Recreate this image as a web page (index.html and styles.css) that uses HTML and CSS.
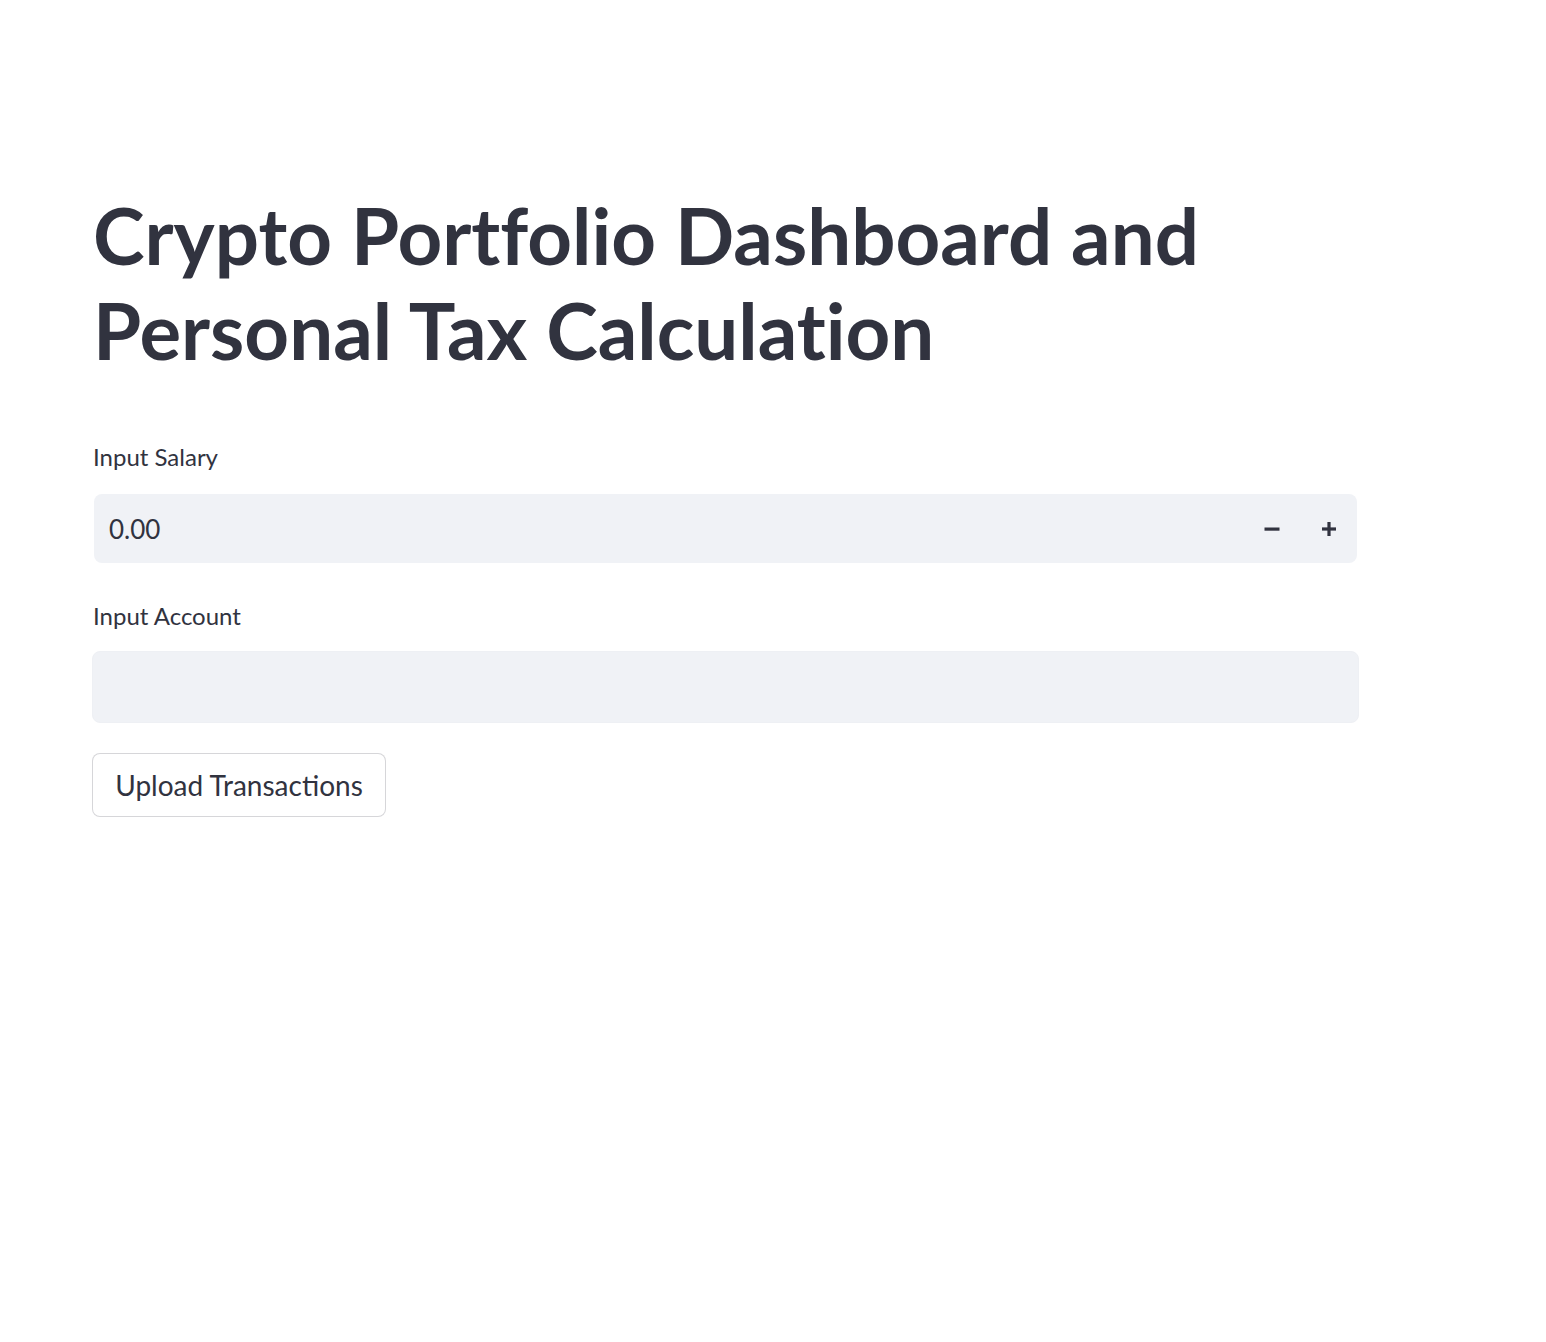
FILE: index.html
```html
<!DOCTYPE html>
<html lang="en">
<head>
<meta charset="utf-8">
<title>Crypto Portfolio Dashboard</title>
<link rel="stylesheet" href="styles.css">
</head>
<body>
<main class="page">
  <h1 class="title">Crypto Portfolio Dashboard and Personal Tax Calculation</h1>

  <div class="field salary">
    <label class="label">Input Salary</label>
    <div class="number-input">
      <span class="value">0.00</span>
      <div class="steps">
        <button class="step" aria-label="decrement">
          <svg width="18" height="18" viewBox="0 0 18 18"><rect x="1.5" y="7.5" width="15" height="3.2" fill="#31333f"/></svg>
        </button>
        <button class="step" aria-label="increment">
          <svg width="18" height="18" viewBox="0 0 18 18"><rect x="2" y="7.4" width="14" height="3.2" fill="#31333f"/><rect x="7.4" y="2" width="3.2" height="14" fill="#31333f"/></svg>
        </button>
      </div>
    </div>
  </div>

  <div class="field account">
    <label class="label">Input Account</label>
    <div class="text-input"></div>
  </div>

  <button class="upload">Upload Transactions</button>
</main>
</body>
</html>
```

FILE: styles.css
```css
html, body {
  margin: 0;
  padding: 0;
  background: #ffffff;
}
body {
  font-family: "Lato", "Noto Sans", sans-serif;
  color: #31333f;
  font-variant-ligatures: none;
}
.page {
  display: flex;
  flex-direction: column;
  align-items: flex-start;
  width: 1267px;
  padding: 188px 0 0 92px;
}
.title {
  margin: 0;
  font-size: 78px;
  font-weight: 700;
  line-height: 95px;
  width: 1200px;
  padding-left: 1px;
  font-variant-ligatures: none;
}
.field {
  display: flex;
  flex-direction: column;
  width: 100%;
}
.salary {
  margin-top: 64px;
}
.account {
  margin-top: 38px;
}
.label {
  font-size: 24px;
  line-height: 30px;
  height: 30px;
  padding-left: 1px;
}
.salary .label { margin-bottom: 22px; }
.account .label { margin-bottom: 20px; }
.number-input {
  display: flex;
  align-items: center;
  height: 69px;
  margin: 0 2px;
  background: #f0f2f6;
  border-radius: 8px;
}
.value {
  flex: 1;
  padding-left: 15px;
  font-size: 26px;
}
.steps {
  display: flex;
  height: 100%;
}
.step {
  width: 57px;
  height: 100%;
  border: 0;
  background: transparent;
  padding: 0;
  display: flex;
  align-items: center;
  justify-content: center;
}
.text-input {
  height: 70px;
  background: #f0f2f6;
  border: 1px solid #eef0f4;
  border-radius: 8px;
}
.upload {
  margin-top: 30px;
  height: 64px;
  width: 294px;
  background: #ffffff;
  border: 1px solid rgba(49, 51, 63, 0.2);
  border-radius: 8px;
  font-family: "Lato", "Noto Sans", sans-serif;
  font-size: 28px;
  color: #31333f;
  padding: 0;
}
```
